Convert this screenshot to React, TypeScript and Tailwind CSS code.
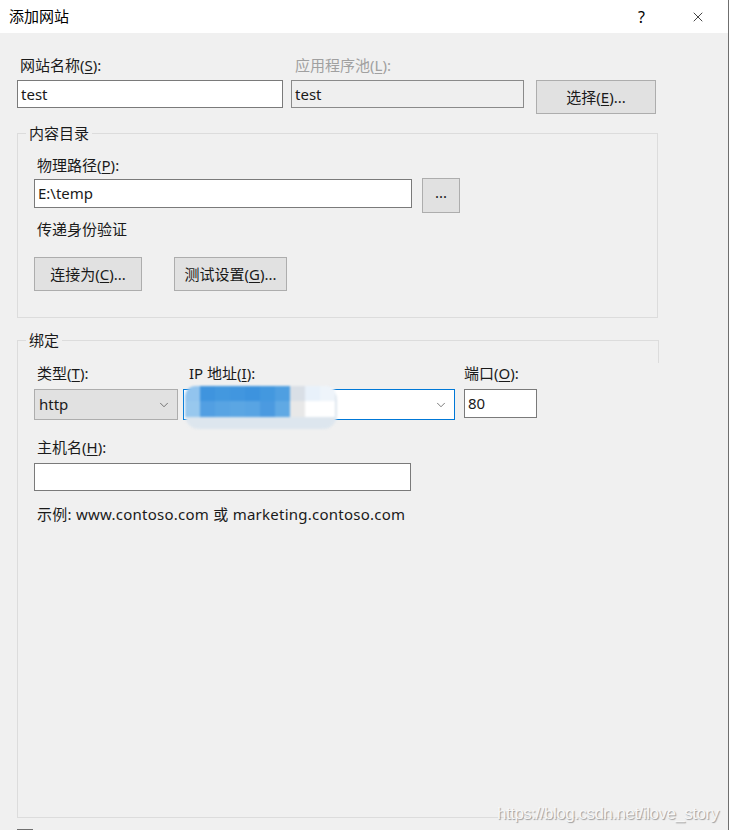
import { ChevronDown, X } from "lucide-react";

const font = "font-['Noto_Sans','Noto_Sans_CJK_SC',sans-serif]";

function Key({ k }: { k: string }) {
  return (
    <>
      (<span className="underline underline-offset-2">{k}</span>)
    </>
  );
}

function Button({ children, className }: { children: React.ReactNode; className: string }) {
  return (
    <div
      className={`flex items-center justify-center border border-[#adadad] bg-[#e1e1e1] text-[15px] text-[#1a1a1a] ${className}`}
    >
      {children}
    </div>
  );
}

// blurred mask over the ip address
const mask = [
  ["#92c4ee", "#3f94de", "#4398df", "#4196df", "#3d93de", "#4398df", "#4f9fe1", "#d9dfe6", "#e8f1fa", "#eef4fa"],
  ["#98c8ee", "#529fe2", "#58a4e3", "#5ba6e3", "#58a4e3", "#4b9ae0", "#60a9e4", "#e8e8e8", "#ffffff", "#ffffff"],
];

export default function App() {
  return (
    <div className={`relative w-[729px] h-[830px] overflow-hidden bg-[#f0f0f0] border-r border-[#6f6f6f] ${font} text-[15px] text-[#1a1a1a]`}>
      {/* title bar */}
      <div className="flex h-[33px] items-center bg-white pl-[9px] pr-[22px]">
        <span className="text-[15px] text-black">添加网站</span>
        <span className="ml-auto mr-[45px] text-[16px] text-black">?</span>
        <X size={16} strokeWidth={1.1} className="text-black" />
      </div>

      <div className="px-[17px] pt-[22px]">
        {/* row 1 */}
        <div className="flex">
          <div className="flex w-[266px] flex-col">
            <span className="pl-[3px] leading-[20px]">
              网站名称<Key k="S" />:
            </span>
            <div className="mt-[5px] flex h-[28px] items-center border border-[#7a7a7a] bg-white pl-[3px]">test</div>
          </div>
          <div className="ml-[8px] flex w-[233px] flex-col">
            <span className="pl-[4px] leading-[20px] text-[#a0a0a0]">
              应用程序池<Key k="L" />:
            </span>
            <div className="mt-[5px] flex h-[28px] items-center border border-[#8a8a8a] bg-[#efefef] pl-[3px]">test</div>
          </div>
          <Button className="ml-[12px] mt-[25px] h-[34px] w-[120px]">
            选择<Key k="E" />...
          </Button>
        </div>

        {/* 内容目录 */}
        <div className="relative mt-[19px] w-[641px] border border-[#dcdcdc] pl-[16px] pt-[21px] pb-[26px]">
          <span className="absolute -top-[11px] left-[8px] bg-[#f0f0f0] px-[3px] leading-[20px]">内容目录</span>
          <div className="pl-[3px] leading-[20px]">
            物理路径<Key k="P" />:
          </div>
          <div className="mt-[3px] flex items-start">
            <div className="mt-[1px] flex h-[29px] w-[378px] items-center border border-[#7a7a7a] bg-white pl-[3px]">E:\temp</div>
            <Button className="ml-[10px] h-[35px] w-[38px] pb-[6px] text-[11px]">...</Button>
          </div>
          <div className="mt-[6px] pl-[3px] leading-[20px]">传递身份验证</div>
          <div className="mt-[18px] flex gap-[32px]">
            <Button className="h-[34px] w-[108px]">
              连接为<Key k="C" />...
            </Button>
            <Button className="h-[34px] w-[113px]">
              测试设置<Key k="G" />...
            </Button>
          </div>
        </div>

        {/* 绑定 */}
        <div className="relative mt-[22px] h-[478px] w-[641px] border-l border-t border-b border-[#dcdcdc] pl-[16px] pt-[22px]">
          <span className="absolute -top-[11px] left-[8px] bg-[#f0f0f0] px-[3px] leading-[20px]">绑定</span>
          <div className="absolute -right-px -top-px h-[23px] w-px bg-[#dcdcdc]" />
          <div className="flex">
            <div className="flex w-[144px] flex-col">
              <span className="pl-[3px] leading-[20px]">
                类型<Key k="T" />:
              </span>
              <div className="mt-[6px] flex h-[31px] items-center border border-[#adadad] bg-[#e1e1e1] pl-[4px] pr-[6px]">
                <span>http</span>
                <ChevronDown size={14} strokeWidth={1.2} className="ml-auto text-[#444]" />
              </div>
            </div>
            <div className="relative ml-[5px] flex w-[272px] flex-col">
              <span className="pl-[6px] leading-[20px]">
                IP 地址<Key k="I" />:
              </span>
              <div className="mt-[6px] flex h-[31px] items-center border border-[#0078d7] bg-white pr-[6px]">
                <ChevronDown size={14} strokeWidth={1.2} className="ml-auto text-[#444]" />
              </div>
              {/* blurred mask */}
              <div className="absolute left-[2px] top-[23px] h-[43px] w-[152px] rounded-[14px] bg-[#dde6ee] blur-[1px]">
                <div className="flex flex-col overflow-hidden rounded-t-[10px]">
                  {mask.map((row, i) => (
                    <div key={i} className={`flex ${i === 0 ? "h-[15px]" : "h-[16px]"}`}>
                      {row.map((c, j) => (
                        <div key={j} className="h-full w-[15px]" style={{ background: c }} />
                      ))}
                    </div>
                  ))}
                </div>
              </div>
            </div>
            <div className="ml-[9px] flex w-[73px] flex-col">
              <span className="leading-[20px]">
                端口<Key k="O" />:
              </span>
              <div className="mt-[6px] flex h-[29px] items-center border border-[#7a7a7a] bg-white pl-[3px]">80</div>
            </div>
          </div>
          <div className="mt-[17px] pl-[3px] leading-[20px]">
            主机名<Key k="H" />:
          </div>
          <div className="mt-[6px] h-[28px] w-[377px] border border-[#7a7a7a] bg-white" />
          <div className="mt-[13px] pl-[3px] leading-[20px] tracking-[0.25px]">示例: www.contoso.com 或 marketing.contoso.com</div>
        </div>
        <div className="mt-[11px] h-[16px] w-[16px] border border-[#707070] bg-[#e5e5e5]" />
      </div>

      <span className="absolute bottom-[4px] left-[497px] font-['Liberation_Sans',sans-serif] text-[17px] tracking-[-0.5px] text-[#f7f7f7] [text-shadow:1px_1px_1px_rgba(0,0,0,0.35)]">
        https://blog.csdn.net/ilove_story
      </span>
    </div>
  );
}
